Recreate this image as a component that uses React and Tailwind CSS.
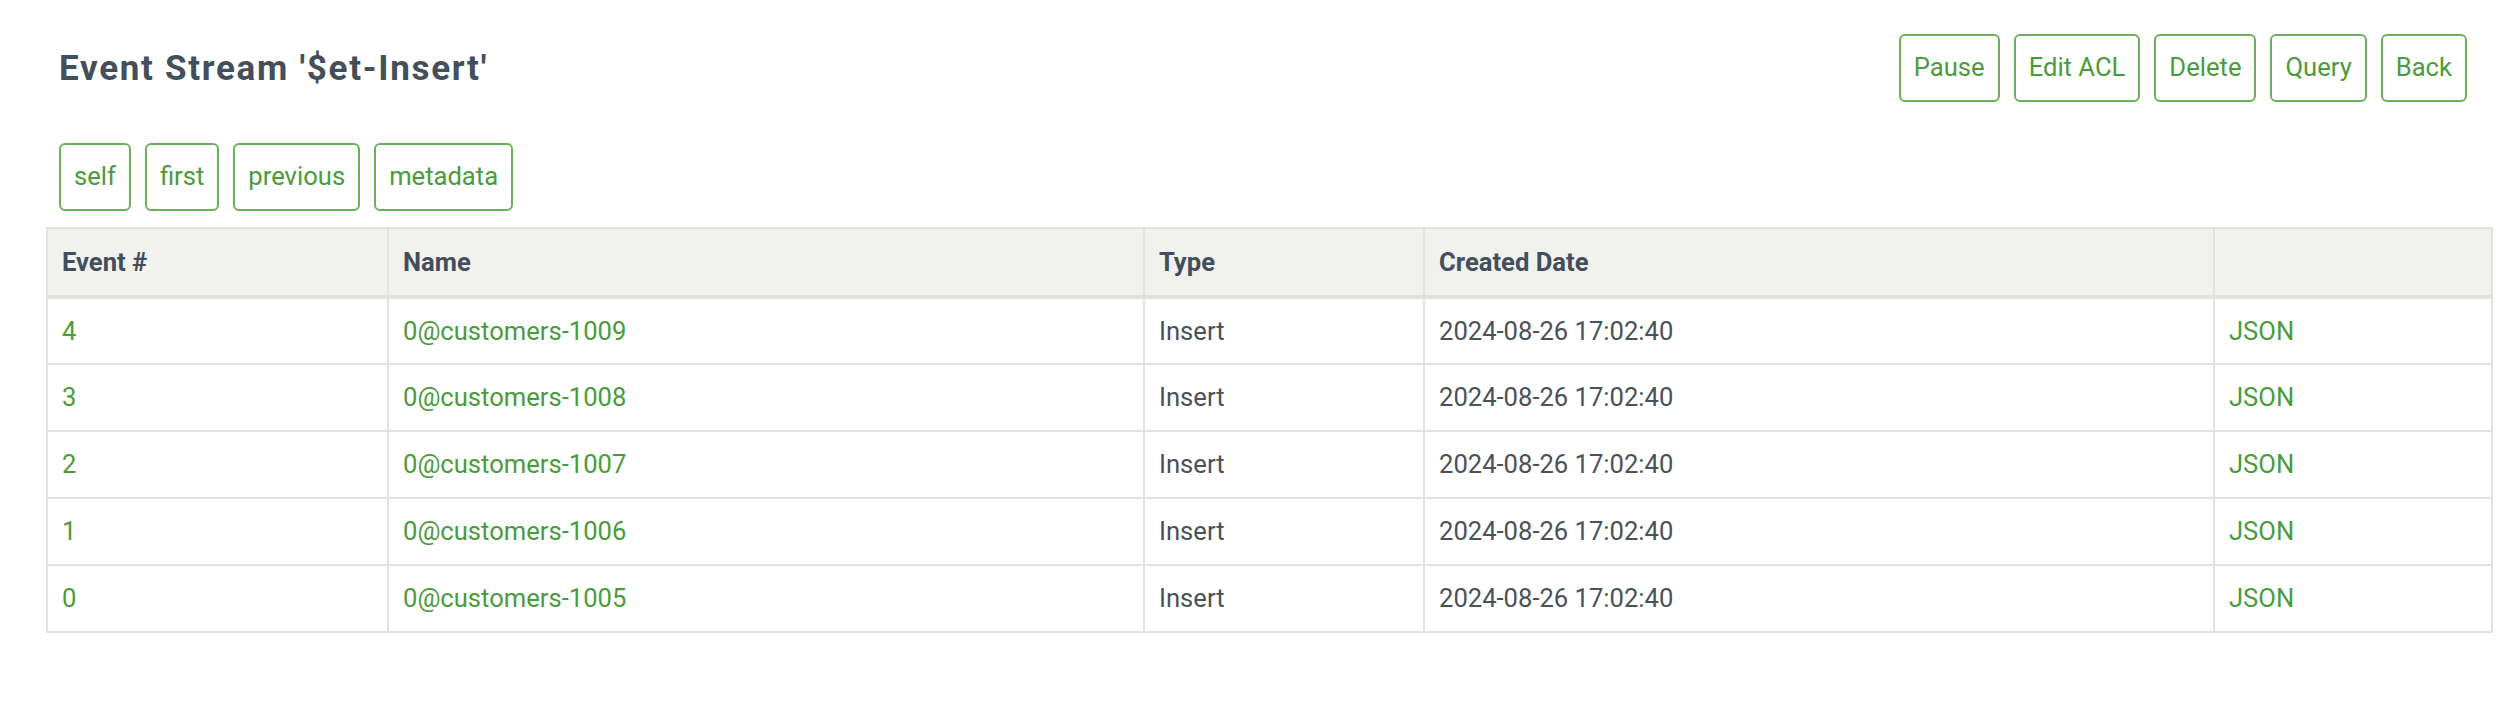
import React from 'react';

const events = [
  { id: 4, name: '0@customers-1009' },
  { id: 3, name: '0@customers-1008' },
  { id: 2, name: '0@customers-1007' },
  { id: 1, name: '0@customers-1006' },
  { id: 0, name: '0@customers-1005' },
];

const actions = ['Pause', 'Edit ACL', 'Delete', 'Query', 'Back'];
const links = ['self', 'first', 'previous', 'metadata'];

function OutlineButton({ label }) {
  return (
    <button className="h-[68px] px-[13px] border-2 border-[#6cb05e] rounded-[6px] text-[#4b9b3c] text-[25.6px] leading-none bg-white">
      {label}
    </button>
  );
}

export default function App() {
  return (
    <div className="min-h-[704px] bg-white pl-[46px] pr-[13px] font-['Roboto',sans-serif]">
      {/* Header */}
      <div className="flex items-center justify-between pt-[34px] pl-[13px] pr-[26px]">
        <h1 className="text-[35px] tracking-[1.7px] font-bold text-[#444f5c] leading-none">Event Stream '$et-Insert'</h1>
        <div className="flex gap-[14px]">
          {actions.map((a) => (
            <OutlineButton key={a} label={a} />
          ))}
        </div>
      </div>

      {/* Links */}
      <div className="flex gap-[14px] mt-[41px] pl-[13px]">
        {links.map((l) => (
          <OutlineButton key={l} label={l} />
        ))}
      </div>

      {/* Table */}
      <table className="mt-[16px] w-full border-collapse border-2 border-[#e2e3df] text-[25.6px] text-left">
        <thead>
          <tr className="bg-[#f1f2ee] text-[#434e5c] font-bold">
            <th className="w-[341px] h-[69px] px-[14px] border-2 border-b-4 border-[#e2e3df]">Event #</th>
            <th className="w-[756px] px-[14px] border-2 border-b-4 border-[#e2e3df]">Name</th>
            <th className="w-[280px] px-[14px] border-2 border-b-4 border-[#e2e3df]">Type</th>
            <th className="w-[790px] px-[14px] border-2 border-b-4 border-[#e2e3df]">Created Date</th>
            <th className="px-[14px] border-2 border-b-4 border-[#e2e3df]"></th>
          </tr>
        </thead>
        <tbody>
          {events.map((e) => (
            <tr key={e.id} className="h-[67px]">
              <td className="px-[14px] border-2 border-[#e2e3df] text-[#4b9b3c]">{e.id}</td>
              <td className="px-[14px] border-2 border-[#e2e3df] text-[#4b9b3c]">{e.name}</td>
              <td className="px-[14px] border-2 border-[#e2e3df] text-[#4a5158]">Insert</td>
              <td className="px-[14px] border-2 border-[#e2e3df] text-[#4a5158]">2024-08-26 17:02:40</td>
              <td className="px-[14px] border-2 border-[#e2e3df] text-[#4b9b3c]">JSON</td>
            </tr>
          ))}
        </tbody>
      </table>
    </div>
  );
}
